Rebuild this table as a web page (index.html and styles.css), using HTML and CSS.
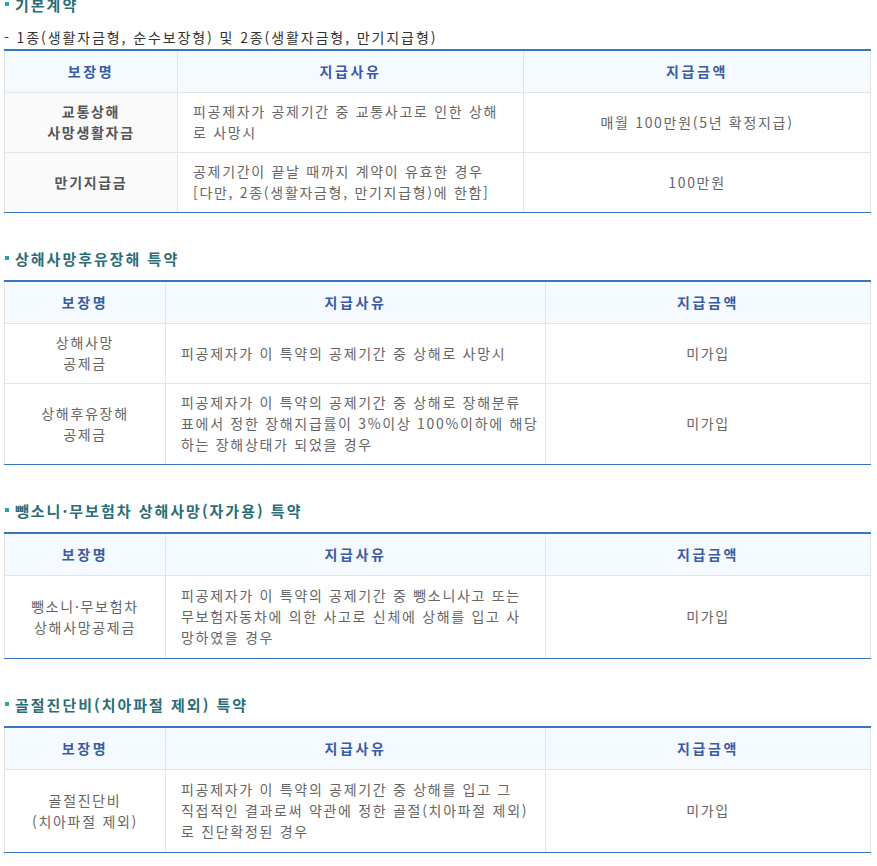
FILE: index.html
```html
<!DOCTYPE html>
<html lang="ko">
<head>
<meta charset="utf-8">
<title>보장내용</title>
<link rel="stylesheet" href="styles.css">
</head>
<body>
<div class="page">

  <section class="sec sec-first">
    <h3 class="sec-title">기본계약</h3>
    <p class="sub">- 1종(생활자금형, 순수보장형) 및 2종(생활자금형, 만기지급형)</p>
    <table class="tbl tbl-basic">
      <colgroup><col class="c1a"><col class="c2a"><col class="c3a"></colgroup>
      <thead>
        <tr><th>보장명</th><th>지급사유</th><th>지급금액</th></tr>
      </thead>
      <tbody>
        <tr>
          <td class="name strong">교통상해<br>사망생활자금</td>
          <td class="reason">피공제자가 공제기간 중 교통사고로 인한 상해<br>로 사망시</td>
          <td class="amt">매월 100만원(5년 확정지급)</td>
        </tr>
        <tr>
          <td class="name strong">만기지급금</td>
          <td class="reason">공제기간이 끝날 때까지 계약이 유효한 경우<br>[다만, 2종(생활자금형, 만기지급형)에 한함]</td>
          <td class="amt">100만원</td>
        </tr>
      </tbody>
    </table>
  </section>

  <section class="sec">
    <h3 class="sec-title">상해사망후유장해 특약</h3>
    <table class="tbl">
      <colgroup><col class="c1"><col class="c2"><col class="c3"></colgroup>
      <thead>
        <tr><th>보장명</th><th>지급사유</th><th>지급금액</th></tr>
      </thead>
      <tbody>
        <tr>
          <td class="name">상해사망<br>공제금</td>
          <td class="reason">피공제자가 이 특약의 공제기간 중 상해로 사망시</td>
          <td class="amt">미가입</td>
        </tr>
        <tr>
          <td class="name">상해후유장해<br>공제금</td>
          <td class="reason">피공제자가 이 특약의 공제기간 중 상해로 장해분류<br>표에서 정한 장해지급률이 3%이상 100%이하에 해당<br>하는 장해상태가 되었을 경우</td>
          <td class="amt">미가입</td>
        </tr>
      </tbody>
    </table>
  </section>

  <section class="sec">
    <h3 class="sec-title">뺑소니·무보험차 상해사망(자가용) 특약</h3>
    <table class="tbl tbl-single">
      <colgroup><col class="c1"><col class="c2"><col class="c3"></colgroup>
      <thead>
        <tr><th>보장명</th><th>지급사유</th><th>지급금액</th></tr>
      </thead>
      <tbody>
        <tr>
          <td class="name">뺑소니·무보험차<br>상해사망공제금</td>
          <td class="reason">피공제자가 이 특약의 공제기간 중 뺑소니사고 또는<br>무보험자동차에 의한 사고로 신체에 상해를 입고 사<br>망하였을 경우</td>
          <td class="amt">미가입</td>
        </tr>
      </tbody>
    </table>
  </section>

  <section class="sec">
    <h3 class="sec-title">골절진단비(치아파절 제외) 특약</h3>
    <table class="tbl tbl-single">
      <colgroup><col class="c1"><col class="c2"><col class="c3"></colgroup>
      <thead>
        <tr><th>보장명</th><th>지급사유</th><th>지급금액</th></tr>
      </thead>
      <tbody>
        <tr>
          <td class="name">골절진단비<br>(치아파절 제외)</td>
          <td class="reason">피공제자가 이 특약의 공제기간 중 상해를 입고 그<br>직접적인 결과로써 약관에 정한 골절(치아파절 제외)<br>로 진단확정된 경우</td>
          <td class="amt">미가입</td>
        </tr>
      </tbody>
    </table>
  </section>

</div>
</body>
</html>
```

FILE: styles.css
```css
html, body {
  margin: 0;
  padding: 0;
  background: #ffffff;
}

body {
  font-family: "Noto Sans CJK KR", "Noto Sans", "Liberation Sans", sans-serif;
  font-size: 14px;
  color: #666666;
  letter-spacing: 1.7px;
}

.page {
  width: 866px;
  margin-left: 4px;
}

.sec {
  margin-top: 36px;
}

.sec-first {
  margin-top: -5px;
}

.sec-title {
  display: flex;
  align-items: center;
  gap: 6px;
  margin: 0 0 11px 0;
  height: 20px;
  line-height: 20px;
  font-size: 15px;
  font-weight: bold;
  letter-spacing: 2px;
  color: #2b6d78;
}

.sec-title::before {
  content: "";
  display: block;
  width: 4px;
  height: 4px;
  margin-left: 1px;
  margin-top: -2px;
  background: #1fa9a0;
}

.sec-first .sec-title {
  margin-bottom: 12px;
}

.sub {
  margin: 0 0 1px 0;
  height: 21px;
  line-height: 21px;
  color: #333333;
  letter-spacing: 1.9px;
  white-space: nowrap;
}

.tbl {
  width: 866px;
  border-collapse: collapse;
  table-layout: fixed;
  border-top: 2px solid #3578c0;
  border-bottom: 1px solid #3578c0;
  border-left: 1px solid #e4e4e4;
  border-right: 1px solid #e4e4e4;
}

.c1a { width: 173px; }
.c2a { width: 346px; }
.c3a { width: 347px; }

.c1 { width: 161px; }
.c2 { width: 380px; }
.c3 { width: 325px; }

.tbl th {
  background: #f5fafe;
  color: #3a5ca3;
  font-weight: bold;
  letter-spacing: 2.6px;
  line-height: 21px;
  padding: 10px 0;
  text-align: center;
  border-right: 1px solid #e4e4e4;
  border-bottom: 1px solid #e4e4e4;
}

.tbl td {
  line-height: 21px;
  padding: 8px 15px 9px 15px;
  vertical-align: middle;
  white-space: nowrap;
  border-right: 1px solid #e4e4e4;
  border-bottom: 1px solid #e4e4e4;
}

.tbl-single td {
  padding-top: 9px;
  padding-bottom: 10px;
}

.tbl tbody tr:last-child td {
  border-bottom: 1px solid #3578c0;
}

.tbl td.name {
  text-align: center;
  padding-left: 4px;
  padding-right: 4px;
}

.tbl td.strong {
  background: #fafafa;
  font-weight: bold;
  color: #555555;
}

.tbl td.reason {
  text-align: left;
}

.tbl td.amt {
  text-align: center;
}
```
